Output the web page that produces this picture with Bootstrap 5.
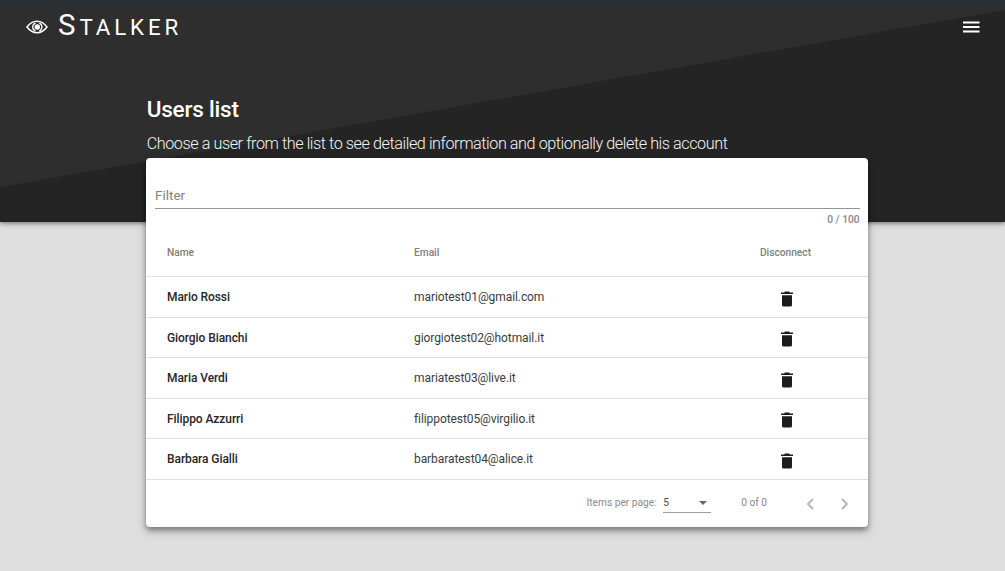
<!DOCTYPE html>
<html lang="en">
<head>
<meta charset="utf-8">
<meta name="viewport" content="width=device-width, initial-scale=1">
<title>Stalker</title>
<link href="https://cdn.jsdelivr.net/npm/bootstrap@5.3.0/dist/css/bootstrap.min.css" rel="stylesheet">
<style>
body{font-family:Roboto,"Liberation Sans",sans-serif;background:#dedede;height:571px;overflow:hidden}
.hero{height:222px;background:linear-gradient(170deg,#2e2e2e 183.7px,#242424 184.7px);box-shadow:0 1px 5px rgba(0,0,0,.55)}
.topline{height:3px;background:linear-gradient(#28313b,#2c2f31)}
.topbar{height:48px;padding:0 25px 0 26px}
.brand{display:block;font-size:22.3px;line-height:40px;height:44px;letter-spacing:3.9px;margin-left:10px}
.brand::first-letter{font-size:29.5px}
.page{width:722px;margin-left:146px}
.title{font-size:22.5px;line-height:28px;font-weight:500;letter-spacing:-.2px;margin:44px 0 0 .7px}
.subtitle{font-size:16.2px;line-height:22px;font-weight:300;letter-spacing:-.437px;margin:10px 0 3px .7px;white-space:nowrap;color:#f4f4f4}
.panel{height:368.5px;border:0;border-radius:4px;box-shadow:0 3px 5px rgba(0,0,0,.3),0 4px 10px rgba(0,0,0,.25)}
.filter{margin:0 8.5px 0 9px;height:51px;padding-top:27px;border-bottom:1px solid #949494;font-size:13.5px;line-height:20px;color:#828282}
.counter{height:20px;line-height:21px;font-size:10.2px;font-weight:500;color:#858585;margin-right:8.5px}
.users{table-layout:fixed;width:722px;--bs-table-bg:transparent;border-color:#e0e0e0}
.users th,.users td{padding:1px 0 0;vertical-align:middle;border-bottom:1px solid #e0e0e0}
.users thead th{height:47.5px;font-size:10.2px;font-weight:500;color:#808080}
.users tbody tr{height:40.55px;font-size:12px;line-height:18px;letter-spacing:-.08px;color:#333}
.users tbody td{color:#3c3c3c}
.users tbody th{font-weight:500;color:#262626}
.users tr>:first-child{padding-left:21px}
.users tr>:last-child{padding-right:2px}
.users svg{display:block;margin:3px auto 0;transform:translateX(1px)}
.pager{height:49px;font-size:10.2px;color:#8a8a8a}
.picker{width:48px;height:20px;border-bottom:1px solid #a0a0a0;color:#4c4c4c;margin:0 30px 0 6.5px;padding-right:4px}
.arrows{margin:1px 10px 0 39px;flex:none}
</style>
</head>
<body>
<header class="hero text-white">
  <div class="topline"></div>
  <nav class="topbar d-flex align-items-center justify-content-between">
    <div class="d-flex align-items-center">
      <svg width="22" height="16" viewBox="0 0 22 16" fill="none" stroke="#fff"><path stroke-width="1.5" d="M1 8C4 4 7.3 2.3 11 2.3S18 4 21 8c-3 4-6.300 5.700-10 5.700S4 12 1 8z"/><circle cx="11.300" cy="8" r="2.700" fill="#fff" stroke="none"/><path stroke-width="1.300" d="M9.500 4.200Q6.700 5.300 6.700 8t2.800 3.800M13.300 4.200Q15.900 5.300 15.900 8t-2.600 3.800"/></svg>
      <span class="brand">STALKER</span>
    </div>
    <svg width="17" height="12" viewBox="0 0 17 12" fill="#fff"><path d="M0 .5h16.500v2H0zM0 5h16.500v2H0zM0 9.500h16.500v2H0z"/></svg>
  </nav>
  <div class="page">
    <h1 class="title">Users list</h1>
    <p class="subtitle">Choose a user from the list to see detailed information and optionally delete his account</p>
    <main class="card panel">
      <div class="filter flex-shrink-0">Filter</div>
      <div class="counter text-end flex-shrink-0">0 / 100</div>
      <table class="table users mb-0">
        <colgroup><col style="width:268px"><col style="width:291px"><col></colgroup>
        <thead><tr><th>Name</th><th>Email</th><th class="text-center">Disconnect</th></tr></thead>
        <tbody>
          <tr><th>Mario Rossi</th><td>mariotest01@gmail.com</td><td><svg width="12" height="16"><use href="#trash"/></svg></td></tr>
          <tr><th>Giorgio Bianchi</th><td>giorgiotest02@hotmail.it</td><td><svg width="12" height="16"><use href="#trash"/></svg></td></tr>
          <tr><th>Maria Verdi</th><td>mariatest03@live.it</td><td><svg width="12" height="16"><use href="#trash"/></svg></td></tr>
          <tr><th>Filippo Azzurri</th><td>filippotest05@virgilio.it</td><td><svg width="12" height="16"><use href="#trash"/></svg></td></tr>
          <tr><th>Barbara Gialli</th><td>barbaratest04@alice.it</td><td><svg width="12" height="16"><use href="#trash"/></svg></td></tr>
        </tbody>
      </table>
      <div class="pager d-flex align-items-center">
        <span class="ms-auto">Items per page:</span>
        <div class="picker d-flex align-items-center justify-content-between"><span>5</span><svg width="8" height="4" viewBox="0 0 8 4"><path d="M0 0h8L4 4z" fill="#666"/></svg></div>
        <span>0 of 0</span>
        <svg class="arrows" width="52" height="12" viewBox="0 0 52 12" fill="none" stroke="#b4b4b4" stroke-width="1.900"><path d="M7 1L2 6l5 5M36 1l5 5-5 5"/></svg>
      </div>
    </main>
  </div>
</header>
<svg width="0" height="0" class="position-absolute"><symbol id="trash" viewBox="0 0 12 16"><path fill="#1d1b20" d="M0 1.500h3L4 .5h4l1 1h3V3H0zM1 4.300h10V14q0 1.500-1.500 1.500h-7Q1 15.500 1 14z"/></symbol></svg>
</body>
</html>
